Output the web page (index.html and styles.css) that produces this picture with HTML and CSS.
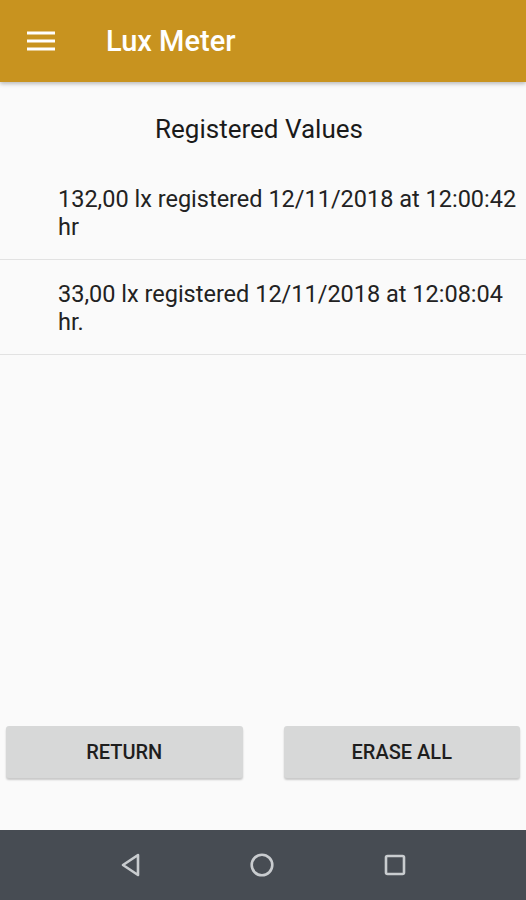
FILE: index.html
```html
<!DOCTYPE html>
<html>
<head>
<meta charset="utf-8">
<link rel="stylesheet" href="styles.css">
</head>
<body>
<div class="screen">
  <header class="appbar">
    <svg class="menu" width="28" height="22" viewBox="0 0 28 22">
      <rect x="0" y="1.5" width="28" height="3" fill="#fff"/>
      <rect x="0" y="9.5" width="28" height="3" fill="#fff"/>
      <rect x="0" y="17.5" width="28" height="3" fill="#fff"/>
    </svg>
    <span class="title">Lux Meter</span>
  </header>
  <main class="content">
    <h1 class="heading">Registered Values</h1>
    <ul class="list">
      <li class="row">132,00 lx registered 12/11/2018 at 12:00:42 hr</li>
      <li class="row">33,00 lx registered 12/11/2018 at 12:08:04 hr.</li>
    </ul>
    <div class="actions">
      <button class="btn">RETURN</button>
      <button class="btn">ERASE ALL</button>
    </div>
  </main>
  <nav class="navbar">
    <svg width="22" height="26" viewBox="0 0 22 26"><path d="M19 3 L4 13 L19 23 Z" fill="none" stroke="#c9cccf" stroke-width="2.6" stroke-linejoin="round"/></svg>
    <svg width="26" height="26" viewBox="0 0 26 26"><circle cx="13" cy="13" r="10.3" fill="none" stroke="#c9cccf" stroke-width="2.6"/></svg>
    <svg width="24" height="24" viewBox="0 0 24 24"><rect x="3" y="3" width="18" height="18" rx="1.5" fill="none" stroke="#c9cccf" stroke-width="2.6"/></svg>
  </nav>
</div>
</body>
</html>
```
FILE: styles.css
```css
html, body {
  margin: 0;
  padding: 0;
}
body {
  font-family: Roboto, "Noto Sans", sans-serif;
  background: #fafafa;
}
.screen {
  width: 526px;
  height: 900px;
  display: flex;
  flex-direction: column;
  overflow: hidden;
}
.appbar {
  height: 82px;
  flex: none;
  background: #c8931f;
  display: flex;
  align-items: center;
  padding-left: 27px;
  box-shadow: 0 2px 4px rgba(0,0,0,0.25);
  position: relative;
  z-index: 1;
}
.menu {
  display: block;
}
.title {
  margin-left: 51px;
  color: #fff;
  font-size: 29px;
  font-weight: 500;
  position: relative;
  top: 0px;
}
.content {
  flex: 1;
  display: flex;
  flex-direction: column;
  background: #fafafa;
}
.heading {
  margin: 33px 0 0 0;
  font-size: 26px;
  line-height: 28px;
  font-weight: 400;
  color: #1a1a1a;
  text-align: center;
  padding-right: 8px;
}
.list {
  list-style: none;
  margin: 22px 0 0 0;
  padding: 0;
}
.row {
  padding: 20px 8px 18px 58px;
  font-size: 23.5px;
  line-height: 28px;
  color: #222;
  border-bottom: 1px solid #e2e2e2;
}
.actions {
  margin-top: auto;
  display: flex;
  gap: 41px;
  padding: 0 6px 52px 6px;
}
.btn {
  flex: 1;
  height: 52px;
  border: none;
  border-radius: 3px;
  background: #d7d8d8;
  box-shadow: 0 2px 2px rgba(0,0,0,0.2);
  font-family: Roboto, "Noto Sans", sans-serif;
  font-size: 20px;
  font-weight: 500;
  color: #1e1e1e;
}
.navbar {
  height: 70px;
  flex: none;
  background: #474c53;
  display: flex;
  align-items: center;
  justify-content: center;
  gap: 108px;
}
.navbar svg {
  display: block;
}
```
